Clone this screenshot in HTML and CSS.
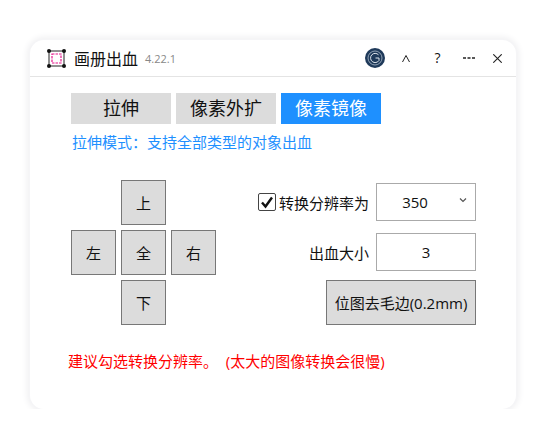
FILE: index.html
```html
<!DOCTYPE html>
<html lang="zh-CN">
<head>
    <meta charset="UTF-8">
    <meta name="viewport" content="width=device-width, initial-scale=1.0">
    <title>画册出血</title>
    <link rel="stylesheet" href="styles.css">
</head>
<body>
    <div class="window">
        <div class="titlebar">
            <svg class="logo" width="19" height="19" viewBox="0 0 19 19">
                <rect x="2" y="2" width="15" height="15" fill="none" stroke="#222" stroke-width="1"/>
                <rect x="5" y="5" width="9" height="9" fill="none" stroke="#e6168c" stroke-width="1.200" stroke-dasharray="2.500 1"/>
                <circle cx="2" cy="2" r="2" fill="#111"/>
                <circle cx="17" cy="2" r="2" fill="#111"/>
                <circle cx="2" cy="17" r="2" fill="#111"/>
                <circle cx="17" cy="17" r="2" fill="#111"/>
            </svg>
            <span class="app-name">画册出血</span>
            <span class="version">4.22.1</span>
            <div class="title-actions">
                <svg class="account" width="20" height="20" viewBox="0 0 20 20">
                    <circle cx="10" cy="10" r="10" fill="#1f3a5a"/>
                    <circle cx="10" cy="10" r="7" fill="none" stroke="#aebccb" stroke-width=".8"/>
                    <path d="M13.500 6.800a4.600 4.600 0 1 0 .5 5.700V10h-3.500" fill="none" stroke="#dfe5ec" stroke-width="1"/>
                </svg>
                <svg class="caret" width="8" height="7" viewBox="0 0 8 7">
                    <path d="M.5 7 4 .5 7.500 7" fill="none" stroke="#222" stroke-width="1"/>
                </svg>
                <span class="help">?</span>
                <svg class="more" width="12" height="2" viewBox="0 0 12 2">
                    <path d="M0 1h3M4.500 1h3M9 1h3" fill="none" stroke="#222" stroke-width="1.400"/>
                </svg>
                <svg class="close" width="9" height="9" viewBox="0 0 9 9">
                    <path d="M.3.300l8.400 8.400M8.700.300.3 8.700" fill="none" stroke="#222" stroke-width="1.100"/>
                </svg>
            </div>
        </div>

        <div class="content">
            <div class="tabs">
                <button class="tab">拉伸</button>
                <button class="tab">像素外扩</button>
                <button class="tab active">像素镜像</button>
            </div>
            <div class="mode-text">拉伸模式：支持全部类型的对象出血</div>

            <div class="panel">
                <div class="pad">
                    <button class="pad-btn up">上</button>
                    <button class="pad-btn left">左</button>
                    <button class="pad-btn all">全</button>
                    <button class="pad-btn right">右</button>
                    <button class="pad-btn down">下</button>
                </div>
                <div class="options">
                    <div class="row first">
                        <span class="checkbox">
                            <svg width="14" height="14" viewBox="0 0 14 14">
                                <path d="M2 7.500 5.500 11.500 12 2.500" fill="none" stroke="#111" stroke-width="2.400"/>
                            </svg>
                        </span>
                        <span class="label">转换分辨率为</span>
                        <div class="field select">
                            350
                            <svg class="chevron" width="8" height="6" viewBox="0 0 8 6">
                                <path d="M1 1.500 4 4.500 7 1.500" fill="none" stroke="#555" stroke-width="1.200"/>
                            </svg>
                        </div>
                    </div>
                    <div class="row second">
                        <span class="label">出血大小</span>
                        <div class="field">3</div>
                    </div>
                    <button class="trim-btn">位图去毛边(0.2mm)</button>
                </div>
            </div>

            <div class="hint">建议勾选转换分辨率。  (太大的图像转换会很慢)</div>
        </div>
    </div>
</body>
</html>
```

FILE: styles.css
```css
* {
    box-sizing: border-box;
}

body {
    margin: 0;
    background-color: white;
    font-family: "Open Sans", "Noto Sans CJK SC", sans-serif;
    color: #111;
}

button {
    font-family: inherit;
    color: inherit;
    padding: 0;
}

.window {
    width: 486px;
    height: 369px;
    margin: 40px 0 0 30px;
    background-color: white;
    border-radius: 14px;
    box-shadow: 0 0 0 1px #f5f5f7, 0 0 6px 3px #f0f0f2;
}

.titlebar {
    display: flex;
    align-items: center;
    height: 37px;
    padding: 0 14px 0 17px;
    border-bottom: 1px solid #e4e4e4;
}

.logo {
    flex: none;
}

.app-name {
    margin-left: 8px;
    font-size: 16px;
}

.version {
    margin-left: 7px;
    font-size: 11px;
    color: #888;
}

.title-actions {
    display: flex;
    align-items: center;
    margin-left: auto;
}

.caret {
    margin-left: 17px;
}

.help {
    width: 7px;
    margin-left: 24px;
    font-size: 14px;
    line-height: 14px;
    text-align: center;
}

.more {
    margin-left: 22px;
}

.close {
    margin-left: 18px;
}

.content {
    padding: 16px 0 0 41px;
}

.tabs {
    display: flex;
    gap: 5px;
}

.tab {
    width: 100px;
    height: 31px;
    border: none;
    background-color: #dcdcdc;
    font-size: 18px;
    line-height: 31px;
}

.tab.active {
    background-color: #1e90ff;
    color: white;
}

.mode-text {
    margin: 8px 0 0 1px;
    font-size: 15px;
    line-height: 20px;
    color: #1e90ff;
}

.panel {
    display: flex;
    justify-content: space-between;
    width: 405px;
    margin-top: 28px;
}

.pad {
    display: grid;
    grid-template-columns: repeat(3, 45px);
    grid-template-rows: repeat(3, 45px);
    gap: 5px;
}

.pad-btn {
    border: 1px solid #777;
    background-color: #dcdcdc;
    font-size: 15px;
}

.up {
    grid-column: 2;
    grid-row: 1;
}

.left {
    grid-column: 1;
    grid-row: 2;
}

.all {
    grid-column: 2;
    grid-row: 2;
}

.right {
    grid-column: 3;
    grid-row: 2;
}

.down {
    grid-column: 2;
    grid-row: 3;
}

.options {
    display: flex;
    flex-direction: column;
    align-items: flex-end;
}

.row {
    display: flex;
    align-items: center;
}

.row.first {
    margin-top: 3px;
}

.row.second {
    margin-top: 12px;
}

.checkbox {
    display: flex;
    align-items: center;
    justify-content: center;
    width: 18px;
    height: 18px;
    margin-right: 3px;
    border: 1px solid #444;
    border-radius: 2px;
}

.label {
    width: 90px;
    margin-right: 7px;
    font-size: 15px;
    text-align: right;
    white-space: nowrap;
}

.field {
    position: relative;
    width: 100px;
    height: 38px;
    border: 1px solid #aaa;
    font-size: 15px;
    line-height: 36px;
    text-align: center;
}

.field.select {
    padding-right: 22px;
}

.chevron {
    position: absolute;
    top: 13px;
    right: 8px;
}

.trim-btn {
    width: 150px;
    height: 45px;
    margin-top: 9px;
    border: 1px solid #777;
    background-color: #dcdcdc;
    font-size: 15px;
}

.hint {
    margin: 26px 0 0 -3px;
    font-size: 15px;
    line-height: 20px;
    color: #f00;
    white-space: pre;
}
```
